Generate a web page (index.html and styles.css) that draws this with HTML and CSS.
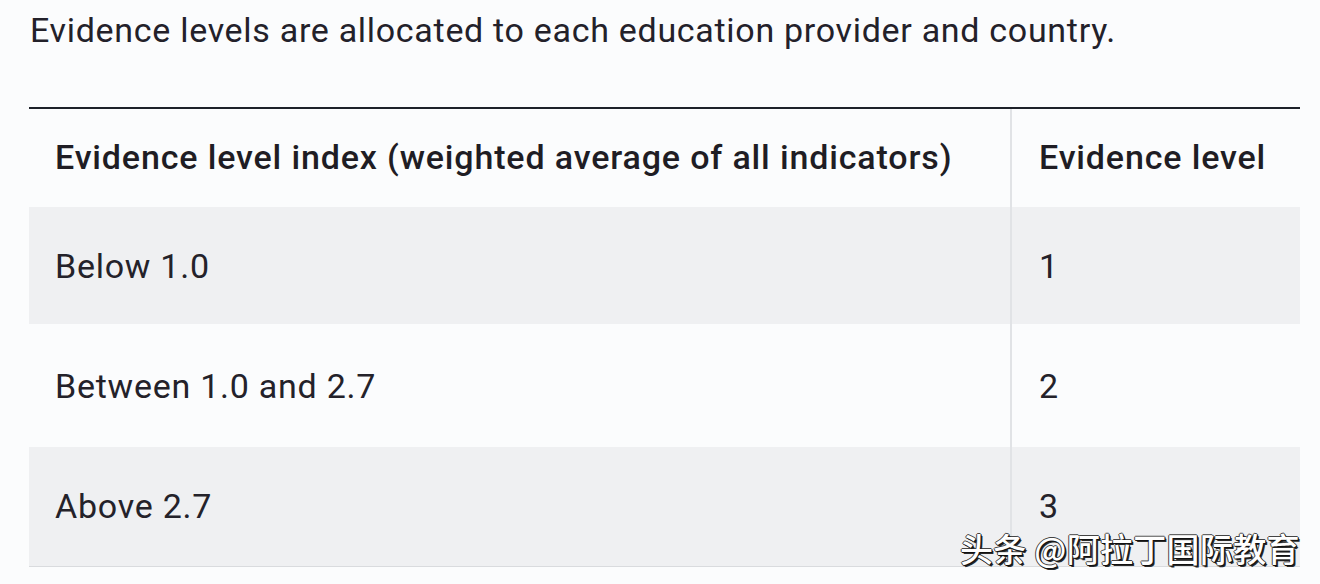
FILE: index.html
```html
<!DOCTYPE html>
<html lang="en">
<head>
<meta charset="utf-8">
<title>Evidence levels</title>
<link rel="stylesheet" href="styles.css">
</head>
<body>
<div class="page">
  <p class="intro">Evidence levels are allocated to each education provider and country.</p>
  <table class="levels">
    <thead>
      <tr class="head-row">
        <th class="col-index">Evidence level index (weighted average of all indicators)</th>
        <th class="col-level">Evidence level</th>
      </tr>
    </thead>
    <tbody>
      <tr class="row row-a">
        <td class="col-index">Below 1.0</td>
        <td class="col-level">1</td>
      </tr>
      <tr class="row row-b">
        <td class="col-index">Between 1.0 and 2.7</td>
        <td class="col-level">2</td>
      </tr>
      <tr class="row row-c">
        <td class="col-index">Above 2.7</td>
        <td class="col-level">3</td>
      </tr>
    </tbody>
  </table>
  <div class="watermark">头条 @阿拉丁国际教育</div>
</div>
</body>
</html>
```

FILE: styles.css
```css
* { box-sizing: border-box; }

html, body {
  margin: 0;
  padding: 0;
}

body {
  background: #fbfcfd;
  font-family: Roboto, "Noto Sans", "Liberation Sans", sans-serif;
  color: #201e26;
  width: 1320px;
  height: 584px;
  overflow: hidden;
}

.page {
  position: relative;
  width: 1320px;
  height: 584px;
  padding: 0 20px 0 29px;
}

.intro {
  margin: 0;
  padding: 9px 0 0 1px;
  height: 107px;
  font-size: 34px;
  line-height: 42px;
  letter-spacing: 0.7px;
  font-weight: 400;
  color: #23212a;
}

.levels {
  width: 1271px;
  border-collapse: collapse;
  table-layout: fixed;
  font-size: 34px;
  letter-spacing: 0.75px;
}

.levels th,
.levels td {
  text-align: left;
  padding: 0 0 0 26px;
  vertical-align: middle;
}

.col-index { width: 982px; }

.levels .col-level {
  border-left: 2px solid #e1e3e6;
  padding-left: 27px;
}

.head-row th {
  border-top: 2px solid #1d2129;
  height: 99px;
  font-weight: 500;
  letter-spacing: 0.85px;
  color: #1f1d24;
  padding-bottom: 2px;
}

.row td { font-weight: 400; color: #24222a; }

.row-a td { height: 117px; background: #eff0f2; }
.row-b td { height: 123px; background: #fbfcfd; }
.row-c td {
  height: 119px;
  background: #eff0f2;
  border-bottom: 1px solid #d9dbde;
}

.watermark {
  position: absolute;
  left: 960px;
  top: 527px;
  font-family: "Noto Sans CJK SC", sans-serif;
  font-size: 33px;
  font-weight: 500;
  letter-spacing: 0.3px;
  line-height: 42px;
  color: #ffffff;
  white-space: nowrap;
  text-shadow: 1px 1px 0 #111, 2px 2px 0 #2a2a2a, -1px 0 0 #444, 0 -1px 0 #444, 1px 0 0 #1a1a1a, 0 1px 0 #1a1a1a;
}
```
